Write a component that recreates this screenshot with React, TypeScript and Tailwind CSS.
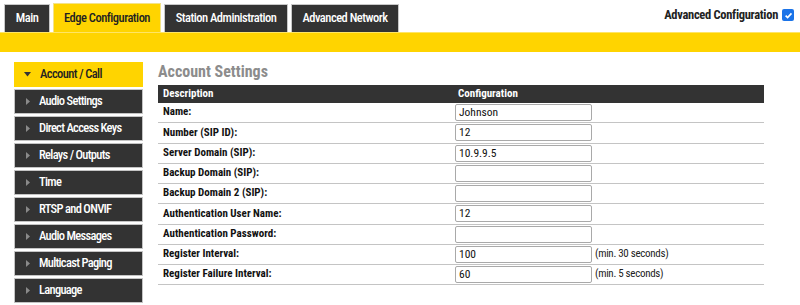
import React from 'react';

const font = { fontFamily: '"Roboto Condensed", Roboto, "Liberation Sans", sans-serif' };

type Row = { label: string; value?: string; note?: string };

const tabs = [
  { name: 'Main', w: 'w-[46px]' },
  { name: 'Edge Configuration', w: 'w-[108px]' },
  { name: 'Station Administration', w: 'w-[124px]' },
  { name: 'Advanced Network', w: 'w-[108px]' },
];

const menu = [
  'Account / Call',
  'Audio Settings',
  'Direct Access Keys',
  'Relays / Outputs',
  'Time',
  'RTSP and ONVIF',
  'Audio Messages',
  'Multicast Paging',
  'Language',
  '',
];

const rows: Row[] = [
  { label: 'Name:', value: 'Johnson' },
  { label: 'Number (SIP ID):', value: '12' },
  { label: 'Server Domain (SIP):', value: '10.9.9.5' },
  { label: 'Backup Domain (SIP):', value: '' },
  { label: 'Backup Domain 2 (SIP):', value: '' },
  { label: 'Authentication User Name:', value: '12' },
  { label: 'Authentication Password:', value: '' },
  { label: 'Register Interval:', value: '100', note: '(min. 30 seconds)' },
  { label: 'Register Failure Interval:', value: '60', note: '(min. 5 seconds)' },
];

function Arrow({ open }: { open: boolean }) {
  if (open) {
    return (
      <svg width="7" height="5" viewBox="0 0 7 5" className="shrink-0">
        <path d="M0 0h7L3.5 4.5z" fill="#333" />
      </svg>
    );
  }
  return (
    <svg width="4" height="7" viewBox="0 0 4 7" className="shrink-0">
      <path d="M0 0v7l4-3.5z" fill="#8a8a8a" />
    </svg>
  );
}

export default function App() {
  return (
    <div className="relative h-[305px] w-[800px] overflow-hidden bg-white" style={font}>
      {/* top tabs */}
      <div className="flex h-[32px] items-end gap-[3px] pl-[4px]">
        {tabs.map((t, i) =>
          i === 1 ? (
            <div
              key={t.name}
              className={`${t.w} flex h-[29px] items-center justify-center border border-b-0 border-[#f3e38a] bg-[#ffd400] text-[12.5px] font-medium tracking-[-0.5px] text-[#222]`}
            >
              {t.name}
            </div>
          ) : (
            <div
              key={t.name}
              className={`${t.w} flex h-[28px] items-center justify-center border border-b-0 border-[#c8c8c8] bg-[#333333] text-[12.5px] font-medium tracking-[-0.5px] text-white`}
            >
              {t.name}
            </div>
          )
        )}
      </div>
      <label className="absolute right-[6px] top-[6px] flex items-center gap-[4px] text-[12.5px] font-bold tracking-[-0.3px] text-[#222]">
        Advanced Configuration
        <span className="flex h-[12px] w-[12px] items-center justify-center rounded-[2px] bg-[#1a73e8]">
          <svg width="9" height="9" viewBox="0 0 10 10">
            <path d="M1.8 5.2l2.2 2.2 4.3-4.8" fill="none" stroke="white" strokeWidth="1.8" />
          </svg>
        </span>
      </label>
      <div className="h-[20px] border-t border-[#ffe566] bg-[#ffd400]" />

      {/* body */}
      <div className="flex pl-[14px] pt-[10px]">
        <nav className="flex w-[129px] flex-col gap-[2px]">
          {menu.map((m, i) =>
            i === 0 ? (
              <div
                key={i}
                className="flex h-[25px] items-center gap-[9px] bg-[#ffd400] pl-[10px] text-[12.5px] font-medium tracking-[-0.6px] text-[#222]"
              >
                <Arrow open />
                {m}
              </div>
            ) : (
              <div
                key={i}
                className="flex h-[25px] items-center gap-[9px] border border-[#c4c4c4] bg-[#333333] pl-[11px] text-[12.5px] font-medium tracking-[-0.7px] text-white"
              >
                {m && <Arrow open={false} />}
                {m}
              </div>
            )
          )}
        </nav>

        <main className="ml-[15px] w-[606px]">
          <h1 className="h-[23px] pt-[1px] text-[16px] font-bold leading-[18px] text-[#8c8c8c]">Account Settings</h1>
          <div className="flex h-[18px] items-center bg-[#333333] text-[11px] font-bold text-white">
            <div className="w-[297px] pl-[5px]">Description</div>
            <div className="pl-[3px]">Configuration</div>
          </div>
          {rows.map((r) => (
            <div key={r.label} className="flex h-[20.25px] items-center border-b-[1.5px] border-[#c4c4c4] text-[11px]">
              <div className="w-[297px] pl-[5px] font-bold text-[#111]">{r.label}</div>
              <div className="flex items-center">
                <div className="flex h-[17px] w-[137px] items-center rounded-[2px] border border-[#a9a9a9] bg-white px-[3px] text-[11.5px] font-normal text-[#111]">
                  {r.value}
                </div>
                {r.note && <span className="ml-[3px] text-[11px] tracking-[-0.3px] text-[#222]">{r.note}</span>}
              </div>
            </div>
          ))}
        </main>
      </div>
    </div>
  );
}
